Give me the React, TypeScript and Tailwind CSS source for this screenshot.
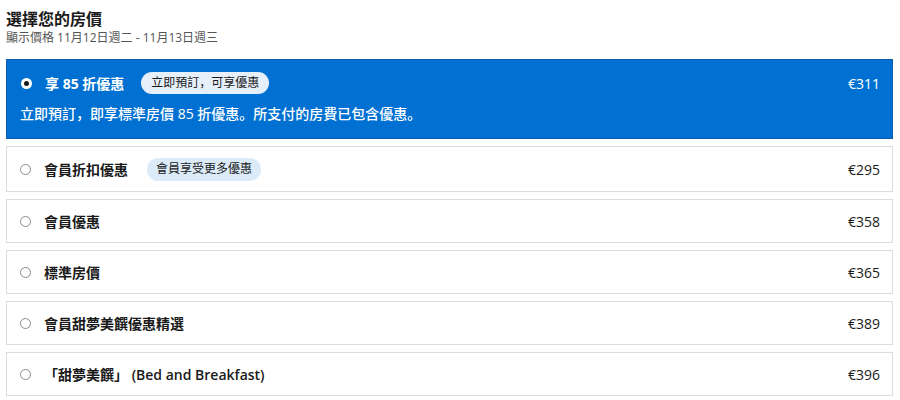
import React from "react";

const font = { fontFamily: '"Open Sans", "Noto Sans CJK SC", sans-serif' };

type Rate = { name: string; price: string; badge?: string };

const rates: Rate[] = [
  { name: "會員折扣優惠", price: "€295", badge: "會員享受更多優惠" },
  { name: "會員優惠", price: "€358" },
  { name: "標準房價", price: "€365" },
  { name: "會員甜夢美饌優惠精選", price: "€389" },
  { name: "「甜夢美饌」 (Bed and Breakfast)", price: "€396" },
];

export default function App() {
  return (
    <div className="w-[900px] h-[400px] bg-white px-[6px] pt-[9px] text-[#1a1a1a] overflow-hidden" style={font}>
      <h2 className="text-[16px] font-bold leading-[20px]">選擇您的房價</h2>
      <p className="text-[12px] leading-[18px] text-[#555]">顯示價格 11月12日週二 - 11月13日週三</p>

      <div className="mt-[12px] w-[887px] flex flex-col gap-[7px]">
        {/* selected rate */}
        <div className="h-[80px] bg-[#0071d2] border border-[#0a5cb0] text-white pl-[13px] pr-[12px] pt-[11px]">
          <div className="flex items-center h-[24px]">
            <span className="w-[11px] h-[11px] rounded-full bg-white flex items-center justify-center ml-[1px]">
              <span className="w-[5px] h-[5px] rounded-full bg-[#1a1a1a]" />
            </span>
            <span className="ml-[13px] text-[14px] font-bold">享 85 折優惠</span>
            <span className="ml-[17px] h-[22px] px-[10px] rounded-full bg-[#e6f0fb] text-[#1a1a1a] text-[12px] flex items-center">
              立即預訂，可享優惠
            </span>
            <span className="ml-auto text-[14px]">€311</span>
          </div>
          <p className="mt-[9px] text-[14px] font-medium leading-[20px]">
            立即預訂，即享標準房價 85 折優惠。所支付的房費已包含優惠。
          </p>
        </div>

        {rates.map((r, i) => (
          <div
            key={r.name}
            className={`${i === 0 ? "h-[46px]" : "h-[44px]"} border border-[#dcdcdc] flex items-center pl-[13px] pr-[12px]`}
          >
            <span className="w-[11px] h-[11px] rounded-full border border-[#8a8a8a]" />
            <span className="ml-[13px] text-[14px] font-semibold">{r.name}</span>
            {r.badge && (
              <span className="ml-[19px] h-[23px] px-[9px] rounded-full bg-[#dcebf9] text-[12px] flex items-center">
                {r.badge}
              </span>
            )}
            <span className="ml-auto text-[14px]">{r.price}</span>
          </div>
        ))}
      </div>
    </div>
  );
}
